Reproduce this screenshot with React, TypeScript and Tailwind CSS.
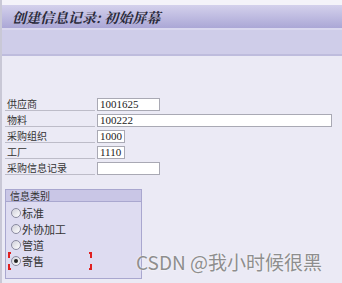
const rows = [
  { label: '供应商', value: '1001625', width: 'w-[63px]' },
  { label: '物料', value: '100222', width: 'w-[235px]' },
  { label: '采购组织', value: '1000', width: 'w-[28px]' },
  { label: '工厂', value: '1110', width: 'w-[28px]' },
  { label: '采购信息记录', value: '', width: 'w-[63px]' },
];

const options = ['标准', '外协加工', '管道', '寄售'];

function Radio({ checked }: { checked: boolean }) {
  return (
    <span className="w-[10px] h-[10px] rounded-full border border-[#8a8aa0] bg-gradient-to-br from-[#d0d0da] to-white flex items-center justify-center">
      {checked && <span className="w-[4px] h-[4px] rounded-full bg-[#222]" />}
    </span>
  );
}

export default function App() {
  return (
    <div className="relative w-[342px] h-[283px] overflow-hidden bg-[#ebeaf5] border-l-2 border-[#c9c8d6] font-['Noto_Sans_CJK_SC',sans-serif] text-[#333]">
      <div className="h-[5px] bg-[#f4f3f9]" />
      <div className="h-[25px] bg-gradient-to-b from-[#d4d1ec] to-[#aba7d6] border-b-2 border-[#dad8ef] flex items-center pl-[10px]">
        <span className="text-[14px] font-bold italic text-[#2a2a3a] leading-none font-['Noto_Serif_CJK_SC','Noto_Sans_CJK_SC',serif]">
          创建信息记录: 初始屏幕
        </span>
      </div>
      <div className="h-[26px] bg-[#cfcde9] border-b-2 border-[#bebcdd]" />

      <div className="pt-[40px] flex flex-col">
        {rows.map((r) => (
          <div key={r.label} className="flex items-center h-[16px]">
            <div className="ml-[3px] w-[90px] h-[14px] border-b border-[#bdbcc8] text-[10px] leading-[14px] pl-[2px] text-[#333]">
              {r.label}
            </div>
            <div
              className={`ml-[2px] ${r.width} h-[13px] bg-white border border-[#a9a9b4] text-[11px] leading-[11px] pl-[2px] font-['Liberation_Serif',serif] text-[#222]`}
            >
              {r.value}
            </div>
          </div>
        ))}
      </div>

      <div className="ml-[3px] mt-[13px] w-[137px] h-[90px] border border-[#a9a7cf] bg-[#dedcf1]">
        <div className="h-[12px] bg-[#c9c6e6] border-b border-[#a9a7cf] text-[10px] leading-[12px] pl-[4px] text-[#333]">
          信息类别
        </div>
        <div className="flex flex-col pt-[3px]">
          {options.map((o, i) => (
            <div key={o} className="relative flex items-center gap-[1px] h-[16px] pl-[5px] text-[11px]">
              <Radio checked={i === 3} />
              <span>{o}</span>
              {i === 3 && (
                <>
                  <span className="absolute left-[2px] top-[-1px] w-[3px] h-[6px] border-l-2 border-t-2 border-[#e02020]" />
                  <span className="absolute left-[2px] bottom-[-1px] w-[3px] h-[6px] border-l-2 border-b-2 border-[#e02020]" />
                  <span className="absolute left-[83px] top-[-1px] w-[3px] h-[6px] border-r-2 border-t-2 border-[#e02020]" />
                  <span className="absolute left-[83px] bottom-[-1px] w-[3px] h-[6px] border-r-2 border-b-2 border-[#e02020]" />
                </>
              )}
            </div>
          ))}
        </div>
      </div>

      <div className="absolute left-[134px] top-[252px] text-[19px] leading-[20px] text-[#8e8e8e] font-['Noto_Sans_CJK_SC',sans-serif] [text-shadow:0_0_2px_#fff]">
        CSDN @我小时候很黑
      </div>
    </div>
  );
}
